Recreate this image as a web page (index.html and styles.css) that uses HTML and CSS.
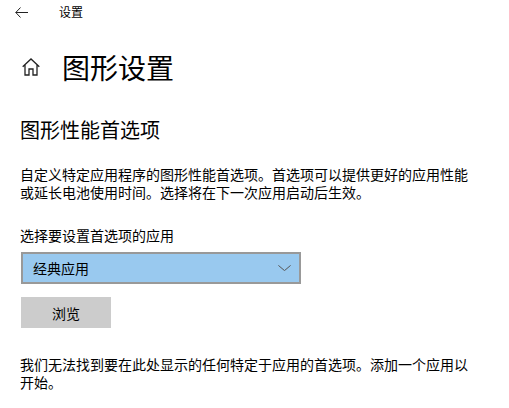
FILE: index.html
```html
<!DOCTYPE html>
<html lang="zh-CN">
<head>
<meta charset="utf-8">
<title>设置</title>
<link rel="stylesheet" href="styles.css">
</head>
<body>
<header class="topbar">
  <svg class="back" width="13" height="11" viewBox="0 0 13 11"><path d="M5.5.5.8 5.5l4.7 5M.8 5.5H13" fill="none" stroke="#222" stroke-width="1"/></svg>
  <span class="topbar-title">设置</span>
</header>
<main class="content">
  <div class="page-head">
    <svg class="home" width="18" height="18" viewBox="0 0 18 18"><path d="M.7 8.8 9 1l8.3 7.8M3 7v10h4v-6h4v6h4V7" fill="none" stroke="#222" stroke-width="1.3"/></svg>
    <h1>图形设置</h1>
  </div>
  <h2>图形性能首选项</h2>
  <p class="desc">自定义特定应用程序的图形性能首选项。首选项可以提供更好的应用性能或延长电池使用时间。选择将在下一次应用启动后生效。</p>
  <label class="field-label">选择要设置首选项的应用</label>
  <div class="select">
    <span>经典应用</span>
    <svg width="13" height="6" viewBox="0 0 13 6"><path d="M.4.4 6.5 5.6 12.6.4" fill="none" stroke="#555" stroke-width="1"/></svg>
  </div>
  <button class="browse">浏览</button>
  <p class="note">我们无法找到要在此处显示的任何特定于应用的首选项。添加一个应用以开始。</p>
</main>
</body>
</html>
```
FILE: styles.css
```css
* { box-sizing: border-box; }
html, body { margin: 0; padding: 0; }
body {
  width: 509px;
  height: 408px;
  overflow: hidden;
  background: #fff;
  color: #000;
  font-family: "Noto Sans CJK SC", "Liberation Sans", sans-serif;
}
.topbar {
  display: flex;
  align-items: center;
  height: 24px;
  padding-left: 15px;
}
.back { flex: none; }
.topbar-title {
  margin-left: 31px;
  font-size: 12px;
  line-height: 24px;
}
.content { padding: 0 20px; }
.page-head {
  display: flex;
  align-items: center;
  height: 40px;
  margin-top: 23px;
}
.home { margin-left: 2px; flex: none; }
h1 {
  margin: 0 0 0 22px;
  font-size: 28px;
  font-weight: 400;
  line-height: 40px;
}
h2 {
  margin: 29px 0 0;
  font-size: 20px;
  font-weight: 400;
  line-height: 28px;
}
.desc {
  margin: 21px 0 0;
  width: 460px;
  font-size: 14px;
  line-height: 18px;
}
.field-label {
  display: block;
  margin-top: 25px;
  font-size: 14px;
  line-height: 19px;
}
.select {
  display: flex;
  align-items: center;
  justify-content: space-between;
  width: 280px;
  height: 32px;
  margin-top: 7px;
  margin-left: 1px;
  padding: 0 8px 0 10px;
  background: #99c9ef;
  border: 2px solid #999;
  font-size: 14px;
}
.browse {
  display: block;
  width: 90px;
  height: 31px;
  margin: 13px 0 0 1px;
  padding: 0;
  border: 0;
  background: #ccc;
  color: #000;
  font: inherit;
  font-size: 14px;
}
.note {
  margin: 27px 0 0;
  width: 460px;
  font-size: 14px;
  line-height: 18px;
}
```
